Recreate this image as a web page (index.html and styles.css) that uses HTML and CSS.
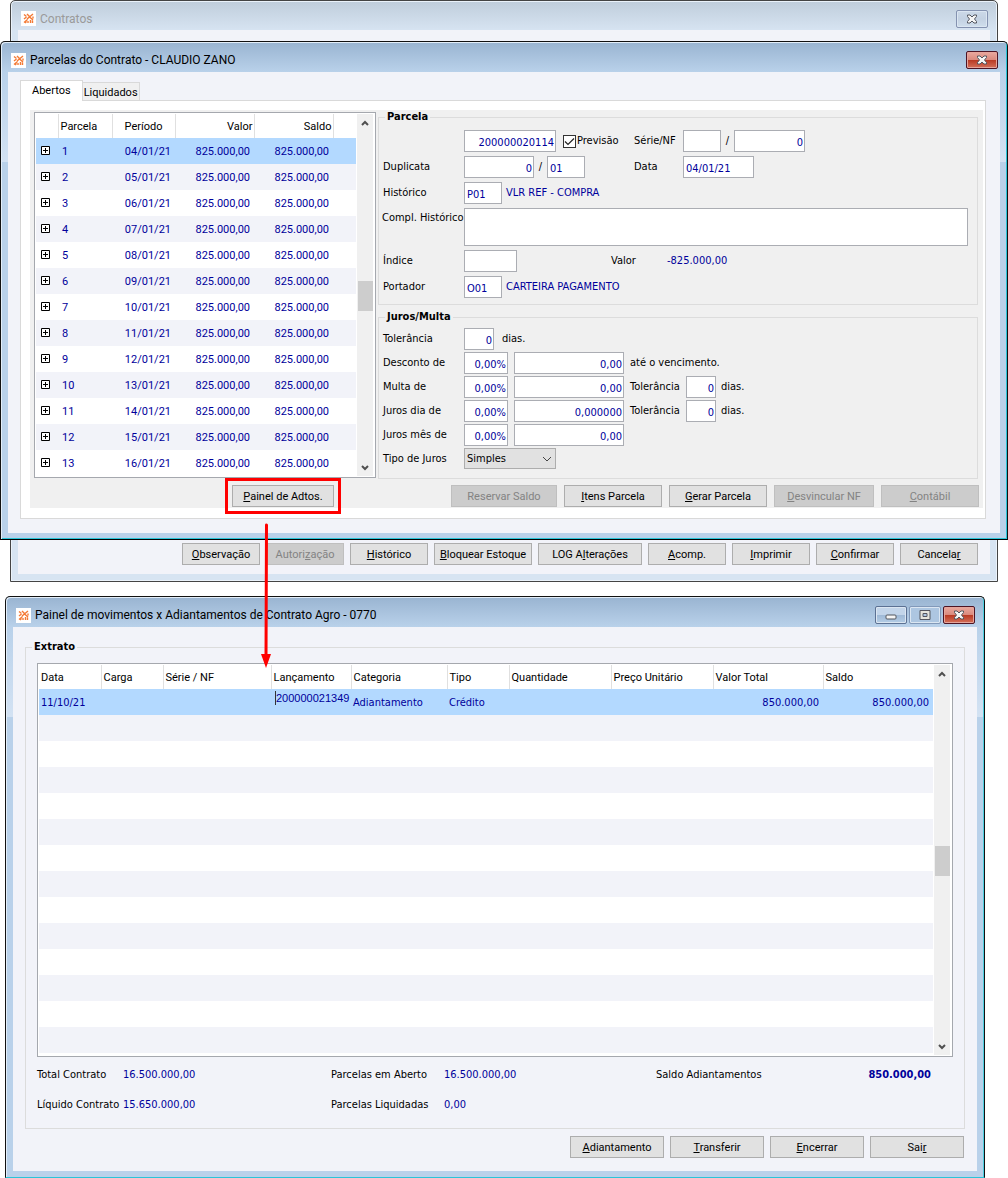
FILE: index.html
```
<!DOCTYPE html>
<html lang="pt-BR">
<head>
    <meta charset="UTF-8">
    <meta name="viewport" content="width=device-width, initial-scale=1.0">
    <title>Parcelas do Contrato</title>
    <link rel="stylesheet" href="styles.css">
</head>
<body>

<svg class="sprite" aria-hidden="true">
    <symbol id="logo" viewBox="0 0 15 15">
        <rect width="15" height="15" fill="#fff"/>
        <g fill="none" stroke="#f47a35" stroke-width="1.400">
            <path d="M3 3.500l2.500 2M6 3l2.500 2.500M9 5.500L12 3M3 8l2.500-2M6 8l2.500-2 3.500 3M3 11.500L6.500 8.500M9.500 9v3M7 10v2M12 5.500v2M11.500 9.500V12M4 12l1.500-1.500"/>
        </g>
    </symbol>
    <symbol id="close" viewBox="0 0 12 10">
        <path d="M1.500 1h2.500l2 2 2-2h2.500v1.500L8.500 5l2 2.500V9H8L6 7 4 9H1.500V7.500L3.500 5l-2-2.500z" fill="#f5f5f5" stroke="#53565f" stroke-width="1"/>
    </symbol>
    <symbol id="up" viewBox="0 0 8 6"><path d="M1 5l3-3 3 3" fill="none" stroke="#505050" stroke-width="2"/></symbol>
    <symbol id="down" viewBox="0 0 8 6"><path d="M1 1l3 3 3-3" fill="none" stroke="#505050" stroke-width="2"/></symbol>
    <symbol id="plus" viewBox="0 0 9 9"><path d="M.5.5h8v8h-8zM2 4.500h5M4.500 2v5" fill="#fff" stroke="#000"/></symbol>
</svg>

<div class="desktop">

    <!-- Janela de fundo: Contratos -->
    <section class="window window-back">
        <header class="titlebar">
            <svg class="logo"><use href="#logo"/></svg>
            <h1>Contratos</h1>
            <button class="win-btn" aria-label="Fechar"><svg width="12" height="10"><use href="#close"/></svg></button>
        </header>
        <div class="client">
            <div class="buttons">
                <button class="w78"><u>O</u>bservação</button>
                <button class="w78" disabled>Autori<u>z</u>ação</button>
                <button class="w78"><u>H</u>istórico</button>
                <button class="w98"><u>B</u>loquear Estoque</button>
                <button class="w104">LOG A<u>l</u>terações</button>
                <button class="w78"><u>A</u>comp.</button>
                <button class="w78"><u>I</u>mprimir</button>
                <button class="w78"><u>C</u>onfirmar</button>
                <button class="w78">Cancela<u>r</u></button>
            </div>
        </div>
    </section>

    <!-- Parcelas do Contrato -->
    <section class="window window-parcelas">
        <header class="titlebar">
            <svg class="logo"><use href="#logo"/></svg>
            <h1>Parcelas do Contrato - CLAUDIO ZANO</h1>
            <button class="win-btn red" aria-label="Fechar"><svg width="12" height="10"><use href="#close"/></svg></button>
        </header>
        <div class="client">
            <div class="tabs">
                <button class="tab active">Abertos</button>
                <button class="tab">Liquidados</button>
            </div>
            <div class="tab-page">
                <div class="panel">
                    <div class="columns">
                        <div class="grid-box grid-parcelas">
                            <table>
                                <colgroup><col class="c22"><col class="c54"><col class="c63"><col class="c79"><col class="c79"><col></colgroup>
                                <thead>
                                    <tr><th></th><th>Parcela</th><th class="mid">Período</th><th class="num">Valor</th><th class="num">Saldo</th><th></th></tr>
                                </thead>
                                <tbody id="parcelas"></tbody>
                            </table>
                            <div class="scroll">
                                <svg><use href="#up"/></svg>
                                <div class="thumb"></div>
                                <svg><use href="#down"/></svg>
                            </div>
                        </div>

                        <div class="forms">
                            <fieldset class="f-parcela">
                                <legend>Parcela</legend>
                                <div class="row">
                                    <span class="lead"></span>
                                    <div class="part"><input class="num w92" value="200000020114" aria-label="Parcela">
                                        <label class="check"><input type="checkbox" checked>Previsão</label></div>
                                    <label class="second" for="serie">Série/NF</label>
                                    <input id="serie" class="w38"><span class="slash">/</span><input class="num w71" value="0" aria-label="NF">
                                </div>
                                <div class="row">
                                    <label class="lead" for="duplicata">Duplicata</label>
                                    <div class="part"><input id="duplicata" class="num w70" value="0"><span class="slash">/</span><input class="w38" value="01" aria-label="Sequência"></div>
                                    <label class="second" for="data">Data</label>
                                    <input id="data" class="w71" value="04/01/21">
                                </div>
                                <div class="row">
                                    <label class="lead" for="historico">Histórico</label>
                                    <input id="historico" class="w38" value="P01"><span class="desc">VLR REF - COMPRA</span>
                                </div>
                                <div class="row memo">
                                    <label class="lead" for="compl">Compl. Histórico</label>
                                    <textarea id="compl"></textarea>
                                </div>
                                <div class="row">
                                    <label class="lead" for="indice">Índice</label>
                                    <div class="part short"><input id="indice" class="w53"></div>
                                    <span class="valor">Valor</span><span class="blue">-825.000,00</span>
                                </div>
                                <div class="row">
                                    <label class="lead" for="portador">Portador</label>
                                    <input id="portador" class="w38" value="O01"><span class="desc">CARTEIRA PAGAMENTO</span>
                                </div>
                            </fieldset>

                            <fieldset class="f-juros">
                                <legend>Juros/Multa</legend>
                                <div class="row">
                                    <label class="lead" for="tol">Tolerância</label>
                                    <input id="tol" class="num w30" value="0"><span class="dias">dias.</span>
                                </div>
                                <div class="row">
                                    <label class="lead" for="desconto">Desconto de</label>
                                    <input id="desconto" class="num w44" value="0,00%"><input class="num w110" value="0,00" aria-label="Valor do desconto">
                                    <span>até o vencimento.</span>
                                </div>
                                <div class="row">
                                    <label class="lead" for="multa">Multa de</label>
                                    <input id="multa" class="num w44" value="0,00%"><input class="num w110" value="0,00" aria-label="Valor da multa">
                                    <label class="tol" for="tolmulta">Tolerância</label><input id="tolmulta" class="num w30" value="0"><span class="after">dias.</span>
                                </div>
                                <div class="row">
                                    <label class="lead" for="jurosdia">Juros dia de</label>
                                    <input id="jurosdia" class="num w44" value="0,00%"><input class="num w110" value="0,000000" aria-label="Valor dos juros ao dia">
                                    <label class="tol" for="toldia">Tolerância</label><input id="toldia" class="num w30" value="0"><span class="after">dias.</span>
                                </div>
                                <div class="row">
                                    <label class="lead" for="jurosmes">Juros mês de</label>
                                    <input id="jurosmes" class="num w44" value="0,00%"><input class="num w110" value="0,00" aria-label="Valor dos juros ao mês">
                                </div>
                                <div class="row">
                                    <label class="lead" for="tipo">Tipo de Juros</label>
                                    <div class="combo">
                                        <select id="tipo"><option>Simples</option></select>
                                        <svg width="10" height="6" viewBox="0 0 10 6"><path d="M1 1l4 4 4-4" fill="none" stroke="#444"/></svg>
                                    </div>
                                </div>
                            </fieldset>
                        </div>
                    </div>

                    <div class="buttons panel-buttons">
                        <button class="w102 marked"><u>P</u>ainel de Adtos.</button>
                        <button class="w106 push" disabled>Reservar Saldo</button>
                        <button class="w98"><u>I</u>tens Parcela</button>
                        <button class="w98"><u>G</u>erar Parcela</button>
                        <button class="w100" disabled><u>D</u>esvincular NF</button>
                        <button class="w98" disabled><u>C</u>ontábil</button>
                    </div>
                </div>
            </div>
        </div>
    </section>

    <!-- Painel de movimentos -->
    <section class="window window-painel">
        <header class="titlebar">
            <svg class="logo"><use href="#logo"/></svg>
            <h1>Painel de movimentos x Adiantamentos de Contrato Agro - 0770</h1>
            <button class="win-btn blue-btn" aria-label="Minimizar"><svg width="12" height="10"><rect x="1" y="5" width="10" height="4" rx="1" fill="#f5f5f5" stroke="#53565f"/></svg></button>
            <button class="win-btn blue-btn soft" aria-label="Maximizar"><svg width="12" height="10"><path d="M1 .5h10v9H1zM4 3.500h4v3H4z" fill="#e4e4dc" stroke="#53565f" fill-rule="evenodd"/></svg></button>
            <button class="win-btn red" aria-label="Fechar"><svg width="12" height="10"><use href="#close"/></svg></button>
        </header>
        <div class="client">
            <fieldset class="f-extrato">
                <legend>Extrato</legend>
                <div class="grid-box grid-extrato">
                    <table>
                        <colgroup><col class="c62"><col class="c62"><col class="c108"><col class="c80"><col class="c96"><col class="c62"><col class="c102"><col class="c102"><col class="c110"><col></colgroup>
                        <thead>
                            <tr><th>Data</th><th>Carga</th><th>Série / NF</th><th>Lançamento</th><th>Categoria</th><th>Tipo</th><th>Quantidade</th><th>Preço Unitário</th><th>Valor Total</th><th>Saldo</th></tr>
                        </thead>
                        <tbody id="extrato">
                            <tr class="selected"><td>11/10/21</td><td></td><td></td><td class="edit"><input value="200000021349" aria-label="Lançamento"></td><td>Adiantamento</td><td>Crédito</td><td></td><td></td><td class="num">850.000,00</td><td class="num">850.000,00</td></tr>
                        </tbody>
                    </table>
                    <div class="scroll">
                        <svg><use href="#up"/></svg>
                        <div class="thumb"></div>
                        <svg><use href="#down"/></svg>
                    </div>
                </div>
                <div class="totals">
                    <span>Total Contrato</span><span class="blue">16.500.000,00</span>
                    <span>Parcelas em Aberto</span><span class="blue">16.500.000,00</span>
                    <span>Saldo Adiantamentos</span><b class="blue">850.000,00</b>
                    <span>Líquido Contrato</span><span class="blue">15.650.000,00</span>
                    <span>Parcelas Liquidadas</span><span class="blue">0,00</span>
                </div>
            </fieldset>
            <div class="buttons">
                <button class="w94"><u>A</u>diantamento</button>
                <button class="w94"><u>T</u>ransferir</button>
                <button class="w94"><u>E</u>ncerrar</button>
                <button class="w94">Sai<u>r</u></button>
            </div>
        </div>
    </section>

    <svg class="arrow" width="12" height="146" viewBox="0 0 12 146">
        <path d="M6.500 2L6 134" stroke="#f00" stroke-width="3" stroke-linecap="round"/>
        <path d="M1 131h10l-5 14z" fill="#f00"/>
    </svg>
</div>

<script>
    // Parcelas em aberto
    const parcelas = document.getElementById('parcelas');
    for (let i = 1; i <= 13; i++) {
        const mes = String(i + 3).padStart(2, '0');
        parcelas.innerHTML += `<tr class="${i === 1 ? 'selected' : ''}">
            <td><button class="expand" aria-label="Expandir"><svg width="9" height="9"><use href="#plus"/></svg></button></td>
            <td>${i}</td><td class="num">${mes}/01/21</td>
            <td class="num">825.000,00</td><td class="num">825.000,00</td><td></td></tr>`;
    }

    // Linhas vazias do extrato
    const extrato = document.getElementById('extrato');
    for (let i = 0; i < 13; i++) {
        extrato.innerHTML += '<tr><td colspan="10"></td></tr>';
    }
</script>

</body>
</html>
```
FILE: styles.css
```
* {
    box-sizing: border-box;
}
body {
    margin: 0;
    background-color: white;
    color: black;
    font: 11px/14px "DejaVu Sans Condensed", "DejaVu Sans", sans-serif;
}
button, input, select, textarea {
    font: inherit;
    color: inherit;
    margin: 0;
}
.sprite {
    display: block;
    width: 0;
    height: 0;
}
.desktop {
    display: grid;
    position: relative;
    row-gap: 14px;
    overflow: hidden;
}

/* windows */
.window {
    display: flex;
    flex-direction: column;
    min-width: 0;
    padding: 0 7px 6px;
    border: 1px solid #111;
    border-bottom-color: #2ac4d8;
    border-radius: 5px 5px 0 0;
    background: linear-gradient(#99b4d1, #b9d1ea 30px, #d3e2f3 120px, #b9d1ea 120px);
    box-shadow: inset 1px 1px #e3eef9, inset -1px 0 #4ccfe0;
}
.window-back {
    grid-area: 1 / 1;
    margin: 0 10px;
    padding-bottom: 7px;
    border-color: #444;
    background: linear-gradient(#bfcddb, #d7e4f2 30px);
    box-shadow: inset 0 0 0 1px #eaf2fa;
}
.window-parcelas {
    grid-area: 1 / 1;
    margin: 41px 0 42px;
    box-shadow: inset 1px 1px #e3eef9, inset -1px -1px #2ac4d8;
    border-bottom-color: #000;
}
.window-painel {
    margin: 0 23px 0 5px;
}
.titlebar {
    display: flex;
    align-items: center;
    gap: 2px;
    height: 30px;
    padding: 6px 2px 0 3px;
}
.window-back .titlebar {
    height: 29px;
}
.titlebar h1 {
    flex: 1;
    margin: 0 0 0 2px;
    font: 12px/16px Roboto, sans-serif;
}
.window-back h1 {
    color: #9a9a9a;
}
.logo {
    width: 15px;
    height: 15px;
}
.win-btn {
    display: flex;
    align-items: center;
    justify-content: center;
    width: 32px;
    height: 18px;
    padding: 0;
    border: 1px solid #8492b0;
    border-radius: 2px;
    background: linear-gradient(#ccd9e8, #c3d1e2 50%, #cfdeec);
    box-shadow: inset 0 0 0 1px #dbe6f2;
}
.win-btn.blue-btn {
    border-color: #5c7193;
    background: linear-gradient(#c3d5ea 50%, #9fb9d6 50%, #b4cde6);
}
.win-btn.soft {
    border-color: #8299b9;
    background: #adc6e1;
}
.win-btn.red {
    border-color: #4d1424;
    background: linear-gradient(#eaa99f, #da8a7e 48%, #b83822 50%, #d4705a);
    box-shadow: inset 0 0 0 1px #e5a59c;
}
.client {
    display: flex;
    flex: 1;
    flex-direction: column;
    background-color: #f2f3f9;
}
.window-back .client {
    justify-content: flex-end;
    padding: 0 12px 9px;
}
.window-parcelas .client {
    padding: 8px 14px 14px 12px;
}
.window-painel .client {
    padding: 13px 12px;
}

/* buttons */
.buttons {
    display: flex;
    justify-content: flex-end;
    gap: 6px;
}
.window-painel .buttons {
    padding-right: 1px;
}
.buttons button {
    height: 22px;
    padding: 1px 0 0;
    border: 1px solid #adadad;
    background-color: #e1e1e1;
    font: 11px/14px Roboto, sans-serif;
    white-space: nowrap;
}
.buttons button:disabled {
    border-color: #bfbfbf;
    background-color: #ccc;
    color: #838383;
}
.panel-buttons {
    gap: 7px;
    padding: 6px 4px 1px 202px;
}
.buttons .marked {
    outline: 3px solid #f00;
    outline-offset: 4px;
}
.push {
    margin-left: auto;
}

/* tabs */
.tabs {
    display: flex;
    align-items: flex-end;
}
.tab {
    height: 18px;
    padding: 2px 1px 0;
    border: 1px solid #d9d9d9;
    border-width: 1px 1px 0 0;
    background-color: #f0f0f0;
    font: 11px/14px Roboto, sans-serif;
}
.tab.active {
    height: 21px;
    margin-bottom: -1px;
    padding: 0 11px;
    border-left-width: 1px;
    background-color: white;
    z-index: 1;
}
.tab-page {
    padding: 9px 2px 10px 9px;
    border: 1px solid #d9d9d9;
    background-color: white;
}
.panel {
    background-color: #f0f0f0;
}
.columns {
    display: flex;
    gap: 2px;
    padding: 0 5px 0 4px;
}

/* grids */
.grid-box {
    display: flex;
    align-items: flex-start;
    gap: 1px;
    padding: 1px;
    border: 1px solid #a5a8ae;
    background-color: white;
}
.grid-box table {
    flex: 1;
    min-width: 0;
    border-collapse: collapse;
    table-layout: fixed;
}
.grid-box th {
    height: 24px;
    padding: 1px 2px 0;
    border-right: 1px solid #e0e0e0;
    font: 11px/14px Roboto, sans-serif;
    text-align: left;
    white-space: nowrap;
}
.grid-box th:last-child {
    border-right: 0;
}
.grid-box th.num {
    padding-right: 1px;
}
.grid-box td {
    height: 26px;
    padding: 1px 2px 0;
    color: #00009b;
    white-space: nowrap;
}
.grid-box tbody tr:nth-child(even) {
    background-color: #f2f3f9;
}
.grid-box tbody tr.selected {
    background-color: #b3d9ff;
}
.grid-box .num {
    text-align: right;
}
.grid-box .mid {
    text-align: center;
}
.grid-parcelas {
    width: 342px;
    height: 366px;
    margin-top: 2px;
}
.grid-parcelas td {
    padding: 1px 4px 0;
    font: 11px/14px Roboto, sans-serif;
}
.grid-parcelas td:first-child {
    padding: 0 4px 1px;
}
.grid-extrato {
    height: 394px;
}
.grid-extrato td.num {
    padding-right: 4px;
}
.grid-extrato .edit {
    padding: 2px 0 0 4px;
    vertical-align: top;
}
.edit input {
    display: block;
    width: 100%;
    height: 14px;
    padding: 0;
    border: 0;
    border-left: 1px solid #333;
    background-color: transparent;
    font: 11px/14px "Liberation Sans", sans-serif;
}
.expand {
    display: block;
    padding: 0 1px;
    border: 0;
    background: none;
}
.expand svg {
    display: block;
}
.scroll {
    display: flex;
    flex-direction: column;
    align-items: center;
    align-self: stretch;
    justify-content: space-between;
    width: 16px;
    margin-right: 1px;
    padding: 6px 0 5px;
    background-color: #f0f0f0;
}
.scroll svg {
    width: 8px;
    height: 6px;
}
.thumb {
    width: 15px;
    height: 30px;
    background-color: #cdcdcd;
}

/* forms */
.forms {
    flex: 1;
    min-width: 0;
}
fieldset {
    min-width: 0;
    margin: 0;
    border: 1px solid #dcdcdc;
}
legend {
    padding: 0 2px;
    font-weight: bold;
}
.f-parcela, .f-juros {
    display: flex;
    flex-direction: column;
}
.f-parcela {
    gap: 4px;
    margin-bottom: 5px;
    padding: 6px 9px 6px 3px;
}
.f-juros {
    gap: 2px;
    padding: 4px 9px 9px 3px;
}
.f-parcela legend, .f-juros legend {
    margin-left: 3px;
}
.row {
    display: flex;
    align-items: center;
}
.lead {
    width: 82px;
    padding-left: 1px;
    white-space: nowrap;
}
.row input, .row textarea {
    height: 22px;
    padding: 3px 1px 0 2px;
    border: 1px solid #abadb3;
    border-radius: 0;
    background-color: white;
    color: #00009b;
}
.row .num {
    text-align: right;
}
.row textarea {
    flex: 1;
    height: 38px;
    resize: none;
}
.memo {
    align-items: flex-start;
}
.memo .lead {
    padding: 3px 0 0;
}
.part {
    display: flex;
    align-items: center;
    width: 170px;
}
.part.short {
    width: 147px;
}
.second {
    width: 49px;
}
.slash {
    width: 13px;
    text-align: center;
}
.valor {
    width: 56px;
}
.desc {
    margin-left: 4px;
}
.desc, .blue {
    color: #00009b;
}
.check {
    display: flex;
    align-items: center;
    gap: 1px;
    margin-left: 7px;
}
.check input {
    appearance: none;
    width: 13px;
    height: 13px;
    padding: 0;
    border: 1px solid #333;
    background: white url("data:image/svg+xml,%3Csvg xmlns='http://www.w3.org/2000/svg' viewBox='0 0 11 11'%3E%3Cpath d='M1 5.500l3 3 6-6' fill='none' stroke='%23222' stroke-width='1.200'/%3E%3C/svg%3E") center / 11px 11px no-repeat;
}
.dias {
    margin-left: 8px;
}
.w110 {
    margin: 0 6px;
}
.tol {
    width: 56px;
}
.after {
    margin-left: 5px;
}
.combo {
    display: grid;
    align-items: center;
    width: 92px;
}
.combo select, .combo svg {
    grid-area: 1 / 1;
}
.combo svg {
    justify-self: end;
    margin-right: 4px;
    pointer-events: none;
}
.combo select {
    appearance: none;
    width: 100%;
    height: 21px;
    padding: 0 2px;
    border: 1px solid #adadad;
    border-radius: 0;
    background-color: #e1e1e1;
}

/* extrato */
.f-extrato {
    margin-bottom: 7px;
    padding: 9px 11px 16px;
}
.f-extrato legend {
    margin-left: -5px;
}
.totals {
    display: grid;
    grid-template-columns: 86px 208px 113px 212px 186px auto;
    row-gap: 16px;
    justify-content: start;
    padding-top: 11px;
}
.totals b {
    width: 89px;
    text-align: right;
}

/* widths */
.w30 { width: 30px; }
.w38 { width: 38px; }
.w44 { width: 44px; }
.w53 { width: 53px; }
.w70 { width: 70px; }
.w71 { width: 71px; }
.w78 { width: 78px; }
.w92 { width: 92px; }
.w94 { width: 94px; }
.w98 { width: 98px; }
.w100 { width: 100px; }
.w102 { width: 102px; }
.w104 { width: 104px; }
.w106 { width: 106px; }
.w110 { width: 110px; }
.c22 { width: 22px; }
.c54 { width: 54px; }
.c62 { width: 62px; }
.c63 { width: 63px; }
.c79 { width: 79px; }
.c80 { width: 80px; }
.c96 { width: 96px; }
.c102 { width: 102px; }
.c108 { width: 108px; }
.c110 { width: 110px; }

/* arrow drawn over the windows */
.arrow {
    position: absolute;
    left: 260px;
    top: 523px;
}
```
